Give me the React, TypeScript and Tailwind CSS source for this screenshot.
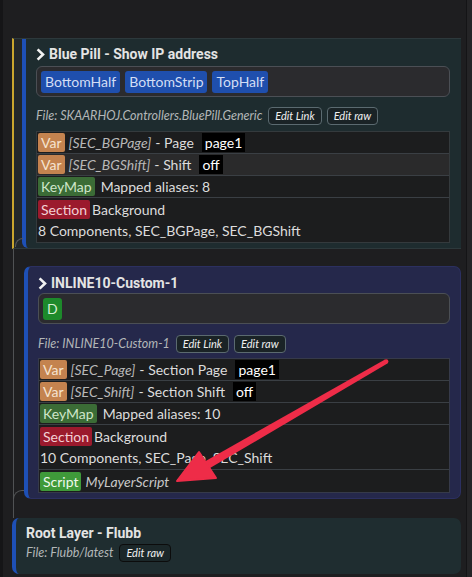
import React from "react";

const Chevron = () => (
  <svg width="9" height="13" viewBox="0 0 9 13" className="shrink-0">
    <path d="M1.6 1.4 L7 6.5 L1.6 11.6" fill="none" stroke="#f2f2f2" strokeWidth="2.6" strokeLinejoin="miter" />
  </svg>
);

const Badge = ({ tone, children }: { tone: string; children: React.ReactNode }) => (
  <span className={`rounded-[2px] px-[3px] leading-[19px] ${tone}`}>{children}</span>
);

const VAR = "bg-[#c4834f] text-[#f6e3d0]";
const KEYMAP = "bg-[#3b6c36] text-[#cfe6c9]";
const SECTION = "bg-[#9b1a2d] text-[#f3d0d5]";
const SCRIPT = "bg-[#3f9a3a] text-[#eef8ec]";

const Value = ({ children }: { children: React.ReactNode }) => (
  <span className="ml-[8px] bg-black px-[3px] leading-[19px] text-white">{children}</span>
);

const Row = ({ children, light }: { children: React.ReactNode; light?: boolean }) => (
  <div
    className={`flex min-h-[22px] items-center border-b border-[#3a3f44] pl-[1px] last:border-b-0 ${
      light ? "bg-[#2a2a2b]" : "bg-[#1c1d1e]"
    }`}
  >
    {children}
  </div>
);

const EditButton = ({ label, dark }: { label: string; dark?: boolean }) => (
  <span
    className={`flex h-[18px] items-center rounded-[4px] border px-[6px] text-[11px] italic text-[#f0f0f0] ${
      dark ? "border-[#0c0c0c] bg-[#1b2729]" : "border-[#5b6a70] bg-[#1a2326]"
    }`}
  >
    {label}
  </span>
);

const FileLine = ({ file, link = true }: { file: string; link?: boolean }) => (
  <div className="flex h-[18px] items-center gap-[5px]">
    <span className="mr-[1px] text-[12.5px] italic text-[#b3b7b8]">File: {file}</span>
    {link && <EditButton label="Edit Link" />}
    <EditButton label="Edit raw" dark={!link} />
  </div>
);

const Title = ({ children }: { children: React.ReactNode }) => (
  <div className="flex h-[18px] items-center gap-[4px] font-['Roboto',sans-serif] text-[14px] font-bold text-[#e4e4e4]">
    <Chevron />
    <span>{children}</span>
  </div>
);

const TagBox = ({ children }: { children: React.ReactNode }) => (
  <div className="flex h-[31px] items-center gap-[5px] rounded-[6px] border border-[#4b4f55] bg-[#2b2b2e] px-[4px]">
    {children}
  </div>
);

const Pill = ({ children, green }: { children: React.ReactNode; green?: boolean }) => (
  <span
    className={`flex h-[22px] items-center rounded-[3px] px-[4px] ${
      green ? "bg-[#1d8a2b] text-[#d6efd6]" : "bg-[#1f4fad] text-[#d3def5]"
    }`}
  >
    {children}
  </span>
);

export default function App() {
  return (
    <div className="relative flex min-h-screen bg-[#1e1e20] font-['Lato',sans-serif] text-[14px] text-[#dcdcdc]">
      <div className="w-[3px] shrink-0 bg-[#151517]" />

      <main className="flex min-w-0 flex-1 flex-col pt-[38px] pb-[5px] pl-[9px] pr-[5px]">
        {/* selected layer */}
        <div className="relative border-y border-l-2 border-[#2d393c] border-l-[#c9a52e] bg-[#22272a] pl-[8px]">
          <div className="rounded-bl-[6px] border-l-4 border-[#1e50b6] bg-[#1e2c2f] pt-[6px] pb-[5px] pl-[10px] pr-[11px]">
            <Title>Blue Pill - Show IP address</Title>
            <div className="mt-[3px]">
              <TagBox>
                <Pill>BottomHalf</Pill>
                <Pill>BottomStrip</Pill>
                <Pill>TopHalf</Pill>
              </TagBox>
            </div>
            <div className="mt-[10px]">
              <FileLine file="SKAARHOJ.Controllers.BluePill.Generic" />
            </div>
            <div className="mt-[6px] border border-[#343a3d]">
              <Row>
                <Badge tone={VAR}>Var</Badge>
                <span className="ml-[4px] italic text-[#b8b8b8]">[SEC_BGPage]</span>
                <span className="ml-[4px]">- Page</span>
                <Value>page1</Value>
              </Row>
              <Row light>
                <Badge tone={VAR}>Var</Badge>
                <span className="ml-[4px] italic text-[#b8b8b8]">[SEC_BGShift]</span>
                <span className="ml-[4px]">- Shift</span>
                <Value>off</Value>
              </Row>
              <Row>
                <Badge tone={KEYMAP}>KeyMap</Badge>
                <span className="ml-[6px]">Mapped aliases: 8</span>
              </Row>
              <div className="flex flex-col bg-[#1c1d1e] pb-[2px] pl-[1px]">
                <div className="flex h-[22px] items-center">
                  <Badge tone={SECTION}>Section</Badge>
                  <span className="ml-[2px]">Background</span>
                </div>
                <div className="flex h-[20px] items-center">8 Components, SEC_BGPage, SEC_BGShift</div>
              </div>
            </div>
          </div>
          <div className="absolute bottom-[1px] left-[1px] h-[9px] w-[8px] rounded-tl-[8px] border-l border-t border-[#56585a]" />
        </div>

        {/* child layer */}
        <div className="relative ml-[1px] border-l border-[#505254] pt-[17px] pb-[19px] pl-[10px]">
          <div className="rounded-[7px] border border-l-4 border-[#2c3060] border-l-[#1e50b6] bg-[#25284b] pt-[7px] pb-[5px] pl-[10px] pr-[10px]">
            <Title>INLINE10-Custom-1</Title>
            <div className="mt-[1px]">
              <TagBox>
                <Pill green>D</Pill>
              </TagBox>
            </div>
            <div className="mt-[11px]">
              <FileLine file="INLINE10-Custom-1" />
            </div>
            <div className="mt-[5px] border border-[#363a4a]">
              <Row>
                <Badge tone={VAR}>Var</Badge>
                <span className="ml-[4px] italic text-[#b8b8b8]">[SEC_Page]</span>
                <span className="ml-[4px]">- Section Page</span>
                <Value>page1</Value>
              </Row>
              <Row>
                <Badge tone={VAR}>Var</Badge>
                <span className="ml-[4px] italic text-[#b8b8b8]">[SEC_Shift]</span>
                <span className="ml-[4px]">- Section Shift</span>
                <Value>off</Value>
              </Row>
              <Row>
                <Badge tone={KEYMAP}>KeyMap</Badge>
                <span className="ml-[6px]">Mapped aliases: 10</span>
              </Row>
              <div className="flex flex-col border-b border-[#3a3f44] bg-[#1c1d1e] pb-[2px] pl-[1px]">
                <div className="flex h-[22px] items-center">
                  <Badge tone={SECTION}>Section</Badge>
                  <span className="ml-[2px]">Background</span>
                </div>
                <div className="flex h-[20px] items-center">10 Components, SEC_Page, SEC_Shift</div>
              </div>
              <Row>
                <Badge tone={SCRIPT}>Script</Badge>
                <span className="ml-[4px] italic text-[#c8c8c8]">MyLayerScript</span>
              </Row>
            </div>
          </div>
          <div className="absolute bottom-[19px] left-[-1px] h-[9px] w-[11px] rounded-tl-[9px] border-l border-t border-[#56585a]" />
        </div>

        {/* root layer */}
        <div className="rounded-[7px] border-l-4 border-[#1e50b6] bg-[#1f2d30] pt-[6px] pb-[12px] pl-[10px]">
          <div className="flex h-[18px] items-center font-['Roboto',sans-serif] text-[14px] font-bold text-[#e4e4e4]">
            Root Layer - Flubb
          </div>
          <div className="mt-[2px]">
            <FileLine file="Flubb/latest" link={false} />
          </div>
        </div>
      </main>

      <div className="w-[6px] shrink-0 border-l border-[#141416] bg-[#242426]" />

      {/* annotation arrow */}
      <svg className="pointer-events-none absolute left-0 top-0" width="472" height="577" viewBox="0 0 472 577">
        <path d="M385 359.6 L387.4 363.4 L209.2 468.6 L204.8 461.4 Z" fill="#ee2c48" />
        <circle cx="386.2" cy="361.5" r="2.2" fill="#ee2c48" />
        <path d="M177 481 L199 452 L216 478 Z" fill="#ee2c48" strokeLinejoin="round" stroke="#ee2c48" strokeWidth="2" />
      </svg>
    </div>
  );
}
